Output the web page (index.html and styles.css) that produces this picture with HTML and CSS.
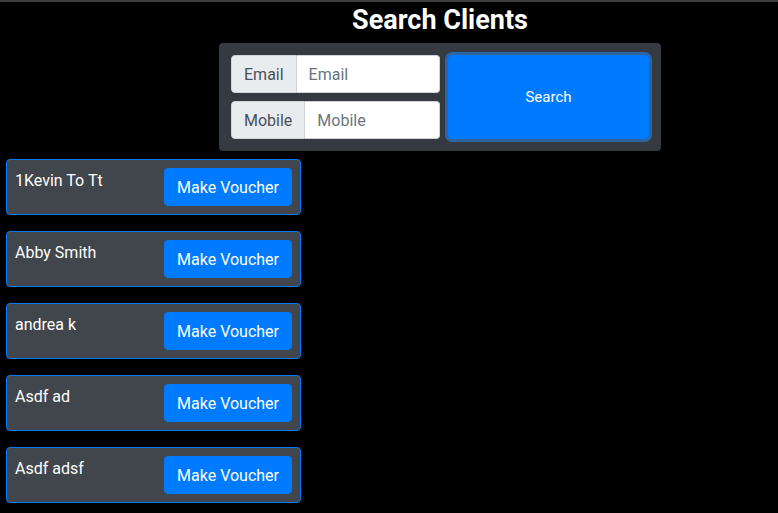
FILE: index.html
```html
<!DOCTYPE html>
<html lang="en">
<head>
<meta charset="utf-8">
<title>Search Clients</title>
<link rel="stylesheet" href="styles.css">
</head>
<body>
<div class="topbar"></div>
<main class="page">
  <section class="search-section">
    <h3 class="title">Search Clients</h3>
    <form class="search-panel">
      <div class="fields">
        <div class="input-group">
          <span class="addon">Email</span>
          <input class="field" type="text" placeholder="Email">
        </div>
        <div class="input-group">
          <span class="addon">Mobile</span>
          <input class="field" type="text" placeholder="Mobile">
        </div>
      </div>
      <button class="search-btn" type="button">Search</button>
    </form>
  </section>
  <ul class="client-list">
    <li class="client-card"><span class="client-name">1Kevin To Tt</span><button class="voucher-btn" type="button">Make Voucher</button></li>
    <li class="client-card"><span class="client-name">Abby Smith</span><button class="voucher-btn" type="button">Make Voucher</button></li>
    <li class="client-card"><span class="client-name">andrea k</span><button class="voucher-btn" type="button">Make Voucher</button></li>
    <li class="client-card"><span class="client-name">Asdf ad</span><button class="voucher-btn" type="button">Make Voucher</button></li>
    <li class="client-card"><span class="client-name">Asdf adsf</span><button class="voucher-btn" type="button">Make Voucher</button></li>
  </ul>
</main>
</body>
</html>
```
FILE: styles.css
```css
* { box-sizing: border-box; }
html, body { height: 100%; }
body {
  margin: 0;
  background: #000;
  color: #fff;
  font-family: Roboto, "Liberation Sans", sans-serif;
  font-size: 16px;
  line-height: 1.5;
  overflow: hidden;
}
.topbar {
  height: 2px;
  background: #3c3c3c;
}
.page {
  padding: 0 6px;
}
.search-section {
  width: 442px;
  margin-left: 213px;
}
.title {
  margin: 0 0 6px;
  padding-top: 2px;
  text-align: center;
  font-size: 27px;
  font-weight: 700;
  line-height: 33px;
}
.search-panel {
  display: flex;
  gap: 8px;
  padding: 12px;
  background: #343a40;
  border-radius: 4px;
  margin: 0;
}
.fields {
  display: flex;
  flex-direction: column;
  gap: 8px;
  width: 209px;
}
.input-group {
  display: flex;
  height: 38px;
}
.addon {
  display: flex;
  align-items: center;
  padding: 1px 12px 0;
  background: #e9ecef;
  color: #495057;
  border: 1px solid #ced4da;
  border-radius: 4px 0 0 4px;
  font-size: 16px;
}
.field {
  flex: 1;
  min-width: 0;
  padding: 2px 12px 0;
  border: 1px solid #ced4da;
  border-left: 0;
  border-radius: 0 4px 4px 0;
  background: #fff;
  font: inherit;
  color: #495057;
}
.field::placeholder { color: #6c757d; }
.search-btn {
  flex: 1;
  padding-top: 2px;
  background: #007bff;
  color: #fff;
  border: 1px solid #007bff;
  border-radius: 4px;
  font: inherit;
  font-size: 15px;
  box-shadow: 0 0 0 3px rgba(38, 143, 255, 0.5);
}
.client-list {
  list-style: none;
  margin: 8px 0 0;
  padding: 0;
  display: flex;
  flex-direction: column;
  gap: 16px;
}
.client-card {
  width: 295px;
  display: flex;
  justify-content: space-between;
  align-items: flex-start;
  padding: 8px;
  background: #40464c;
  border: 1px solid #007bff;
  border-radius: 4px;
}
.client-name {
  line-height: 24px;
  padding-top: 1px;
}
.voucher-btn {
  height: 38px;
  padding: 1px 12px 0;
  background: #007bff;
  color: #fff;
  border: 1px solid #007bff;
  border-radius: 4px;
  font: inherit;
}
```
